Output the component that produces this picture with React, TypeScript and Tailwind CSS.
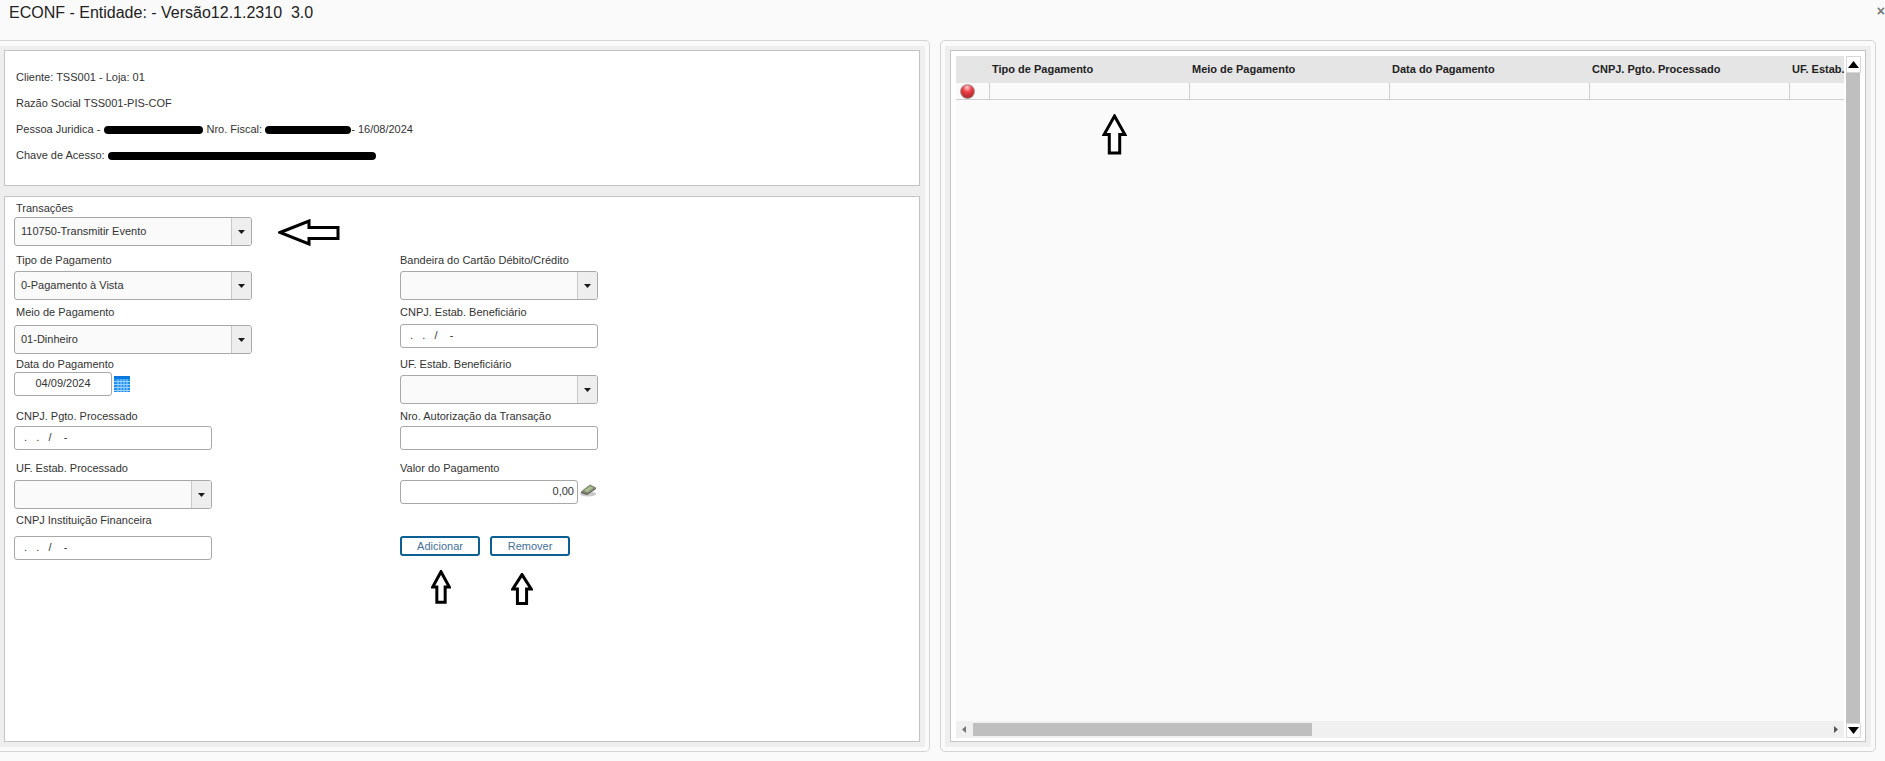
const font = "font-['Liberation_Sans',Arial,sans-serif]";

function Caret() {
  return (
    <svg width="8" height="4" viewBox="0 0 8 4" aria-hidden="true">
      <path d="M0 0h7L3.5 4z" fill="#1a1a1a" />
    </svg>
  );
}

function Label({ text, className }: { text: string; className: string }) {
  return <div className={`h-4 text-[11px] leading-4 text-[#333] whitespace-nowrap ${className}`}>{text}</div>;
}

function Select({ value, className, widthClass }: { value?: string; className?: string; widthClass: string }) {
  return (
    <div className={`flex h-[29px] ${widthClass} items-stretch rounded-[3px] border border-[#a8a8a8] bg-[#fafafa] ${className ?? ""}`}>
      <div className="flex-1 truncate pl-[6px] text-[11px] leading-[26px] text-[#333]">{value}</div>
      <div className="flex w-[20px] items-center justify-center rounded-r-[2px] border-l border-[#c8c8c8] bg-[#eeeeee]">
        <Caret />
      </div>
    </div>
  );
}

function Input({ value, widthClass, align, indent }: { value: string; widthClass: string; align?: string; indent?: string }) {
  return (
    <div className={`h-[24px] ${widthClass} rounded-[3px] border border-[#a8a8a8] bg-white text-[11px] leading-[21px] text-[#333] whitespace-pre ${align ?? "text-left"} ${indent ?? "pl-[6px]"}`}>
      {value}
    </div>
  );
}

function UpArrow({ w, h, className }: { w: number; h: number; className: string }) {
  return (
    <svg className={`absolute ${className}`} width={w} height={h} viewBox="0 0 24 40" preserveAspectRatio="none" aria-hidden="true">
      <path d="M12 2 22 20h-5v18H7V20H2z" fill="white" stroke="black" strokeWidth="3" vectorEffect="non-scaling-stroke" />
    </svg>
  );
}

function CalendarIcon() {
  return (
    <svg width="16" height="16" viewBox="0 0 16 16" className="ml-[2px] mt-[4px]" aria-hidden="true">
      <rect width="16" height="16" fill="#1e90f0" />
      <rect y="0" width="16" height="3" fill="#0a78dc" />
      {[3, 6, 9, 12].map((x) => (
        <rect key={`v${x}`} x={x + 0.5} y="3" width="1" height="13" fill="#9fd2fa" />
      ))}
      {[5, 8, 11, 14].map((y) => (
        <rect key={`h${y}`} x="0" y={y} width="16" height="1" fill="#9fd2fa" />
      ))}
    </svg>
  );
}

function MoneyIcon() {
  return (
    <svg width="17" height="14" viewBox="0 0 17 14" className="ml-[2px] mt-[3px]" aria-hidden="true">
      <ellipse cx="8" cy="11" rx="8" ry="2.6" fill="#c8c8c8" />
      <path d="M1 8.5 10 1.5l6 3-9 6z" fill="#7f8470" />
      <path d="M4 7.8 10 3l3.5 1.8-6 4.4z" fill="#a9c08e" />
      <path d="M1 8.5l6 2 9-6v1.5l-9 6-6-2z" fill="#5f5f54" />
    </svg>
  );
}

function RedBall() {
  return (
    <svg width="15" height="15" viewBox="0 0 15 15" aria-hidden="true">
      <defs>
        <radialGradient id="ball" cx="48%" cy="22%" r="80%">
          <stop offset="0%" stopColor="#ffd0d0" />
          <stop offset="40%" stopColor="#ee3f46" />
          <stop offset="100%" stopColor="#a3252a" />
        </radialGradient>
      </defs>
      <circle cx="7.5" cy="7.5" r="7" fill="url(#ball)" stroke="#9a9a9a" strokeWidth="0.8" />
    </svg>
  );
}

function Redacted({ className }: { className: string }) {
  return <span className={`inline-block h-[8px] rounded-full bg-black align-[-1px] ${className}`} />;
}

const cols = ["Tipo de Pagamento", "Meio de Pagamento", "Data do Pagamento", "CNPJ. Pgto. Processado", "UF. Estab."];

export default function App() {
  return (
    <div className={`relative flex h-[761px] w-[1885px] flex-col overflow-hidden bg-[#fafafa] ${font}`}>
      <header className="relative h-[40px] shrink-0 pl-[9px] pt-[1px] text-[16px] leading-[24px] text-[#222] whitespace-pre">
        ECONF - Entidade: - Versão12.1.2310  3.0
        <span className="absolute right-0 top-[4px] text-[14px] font-bold leading-[14px] text-[#777]">×</span>
      </header>

      <main className="flex h-[712px] shrink-0">
        {/* Left card */}
        <section className="h-full w-[930px] rounded-r-[5px] border-y border-r border-[#d4d4d4] pb-[4px] pr-[4px] pt-[5px]">
          <div className="flex h-full flex-col gap-[10px] bg-[#eeeeee] pb-[5px] pl-[4px] pr-[5px] pt-[4px]">
            <div className="flex h-[136px] shrink-0 flex-col gap-[10px] border border-[#c4c4c4] bg-white pl-[11px] pt-[19px] text-[11px] leading-4 text-[#333]">
              <div className="-mt-[1px]">Cliente: TSS001 - Loja: 01</div>
              <div>Razão Social TSS001-PIS-COF</div>
              <div className="whitespace-nowrap">
                Pessoa Juridica - <Redacted className="ml-[1px] w-[99px]" /> Nro. Fiscal: <Redacted className="ml-0 w-[86px]" />- 16/08/2024
              </div>
              <div className="whitespace-nowrap">
                Chave de Acesso: <Redacted className="w-[268px]" />
              </div>
            </div>

            <div className="relative flex min-h-0 flex-1 border border-[#c4c4c4] bg-white pl-[9px] pt-[3px]">
              {/* Column 1 */}
              <div className="flex w-[386px] shrink-0 flex-col">
                <Label text="Transações" className="ml-[2px]" />
                <Select value="110750-Transmitir Evento" widthClass="w-[238px]" className="mt-[1px]" />
                <Label text="Tipo de Pagamento" className="ml-[2px] mt-[6px]" />
                <Select value="0-Pagamento à Vista" widthClass="w-[238px]" className="mt-[3px]" />
                <Label text="Meio de Pagamento" className="ml-[2px] mt-[4px]" />
                <Select value="01-Dinheiro" widthClass="w-[238px]" className="mt-[5px]" />
                <Label text="Data do Pagamento" className="ml-[2px] mt-[2px]" />
                <div className="flex">
                  <Input value="04/09/2024" widthClass="w-[98px]" align="text-center" indent="pl-0" />
                  <CalendarIcon />
                </div>
                <Label text="CNPJ. Pgto. Processado" className="ml-[2px] mt-[12px]" />
                <div className="mt-[2px]"><Input value=" .   .   /    -" widthClass="w-[198px]" /></div>
                <Label text="UF. Estab. Processado" className="ml-[2px] mt-[10px]" />
                <Select widthClass="w-[198px]" className="mt-[4px]" />
                <Label text="CNPJ Instituição Financeira" className="ml-[2px] mt-[3px]" />
                <div className="mt-[8px]"><Input value=" .   .   /    -" widthClass="w-[198px]" /></div>
              </div>

              {/* Column 2 */}
              <div className="flex flex-col pt-[52px]">
                <Label text="Bandeira do Cartão Débito/Crédito" />
                <Select widthClass="w-[198px]" className="mt-[3px]" />
                <Label text="CNPJ. Estab. Beneficiário" className="mt-[4px]" />
                <div className="mt-[4px]"><Input value=" .   .   /    -" widthClass="w-[198px]" /></div>
                <Label text="UF. Estab. Beneficiário" className="mt-[8px]" />
                <Select widthClass="w-[198px]" className="mt-[3px]" />
                <Label text="Nro. Autorização da Transação" className="mt-[4px]" />
                <div className="mt-[2px]"><Input value="" widthClass="w-[198px]" /></div>
                <Label text="Valor do Pagamento" className="mt-[10px]" />
                <div className="mt-[4px] flex">
                  <Input value="0,00" widthClass="w-[178px]" align="text-right" indent="pr-[3px]" />
                  <MoneyIcon />
                </div>
                <div className="mt-[32px] flex gap-[10px]">
                  <button className="h-[20px] w-[80px] rounded-[3px] border-2 border-[#0b5f93] bg-white text-[11px] leading-[16px] text-[#44709a]">Adicionar</button>
                  <button className="h-[20px] w-[80px] rounded-[3px] border-2 border-[#0b5f93] bg-white text-[11px] leading-[16px] text-[#44709a]">Remover</button>
                </div>
              </div>

              {/* annotation arrows */}
              <svg className="absolute left-[273px] top-[22px]" width="62" height="27" viewBox="0 0 62 27" aria-hidden="true">
                <path d="M2 13.5 31 2v6.5h29v11H31V25z" fill="white" stroke="black" strokeWidth="3" />
              </svg>
              <UpArrow w={20} h={34} className="left-[426px] top-[373px]" />
              <UpArrow w={22} h={32} className="left-[506px] top-[376px]" />
            </div>
          </div>
        </section>

        {/* Right card */}
        <section className="ml-[10px] h-full w-[936px] rounded-[5px] border border-[#d4d4d4] px-[4px] pb-[4px] pt-[5px]">
          <div className="h-full bg-[#eeeeee] px-[5px] pb-[5px] pt-[4px]">
            <div className="relative flex h-full flex-col border border-[#c4c4c4] bg-white pb-[3px] pl-[5px] pr-[5px] pt-[5px]">
              <div className="flex min-h-0 flex-1">
                <div className="flex w-[888px] shrink-0 flex-col overflow-hidden bg-[#fafafa]">
                  <div className="flex h-[27px] shrink-0 bg-[#e5e5e5] text-[11px] font-bold leading-[27px] text-[#222]">
                    <div className="w-[33px] shrink-0" />
                    {cols.map((c, i) => (
                      <div key={c} className={`shrink-0 whitespace-nowrap pl-[3px] ${i === 4 ? "w-[55px]" : "w-[200px]"}`}>{c}</div>
                    ))}
                  </div>
                  <div className="flex h-[17px] shrink-0 border-b border-[#cfcfcf]">
                    <div className="flex w-[34px] shrink-0 items-center border-r border-[#cfcfcf] pl-[4px]"><RedBall /></div>
                    <div className="w-[200px] shrink-0 border-r border-[#cfcfcf]" />
                    <div className="w-[200px] shrink-0 border-r border-[#cfcfcf]" />
                    <div className="w-[200px] shrink-0 border-r border-[#cfcfcf]" />
                    <div className="w-[200px] shrink-0 border-r border-[#cfcfcf]" />
                  </div>
                  <div className="flex-1" />
                  <div className="flex h-[17px] shrink-0 items-center bg-[#f0f0f0]">
                    <svg className="ml-[6px]" width="4" height="7" viewBox="0 0 4 7" aria-hidden="true"><path d="M4 0v7L0 3.5z" fill="#777" /></svg>
                    <div className="ml-[7px] h-[13px] w-[339px] bg-[#bfbfbf]" />
                    <div className="flex-1" />
                    <svg className="mr-[6px]" width="4" height="7" viewBox="0 0 4 7" aria-hidden="true"><path d="M0 0v7l4-3.5z" fill="#555" /></svg>
                  </div>
                </div>
                <div className="ml-[2px] flex w-[15px] shrink-0 flex-col">
                  <div className="flex h-[17px] shrink-0 items-center justify-center border border-[#d8d8d8] bg-white"><svg width="11" height="7" viewBox="0 0 11 7" aria-hidden="true"><path d="M5.5 0 11 7H0z" fill="#000" /></svg></div>
                  <div className="w-[14px] flex-1 bg-[#bfbfbf]" />
                  <div className="flex h-[15px] shrink-0 items-center justify-center border border-[#d8d8d8] bg-white"><svg width="11" height="7" viewBox="0 0 11 7" aria-hidden="true"><path d="M0 0h11L5.5 7z" fill="#000" /></svg></div>
                </div>
              </div>
              <UpArrow w={25} h={41} className="left-[151px] top-[63px]" />
            </div>
          </div>
        </section>
      </main>
    </div>
  );
}
